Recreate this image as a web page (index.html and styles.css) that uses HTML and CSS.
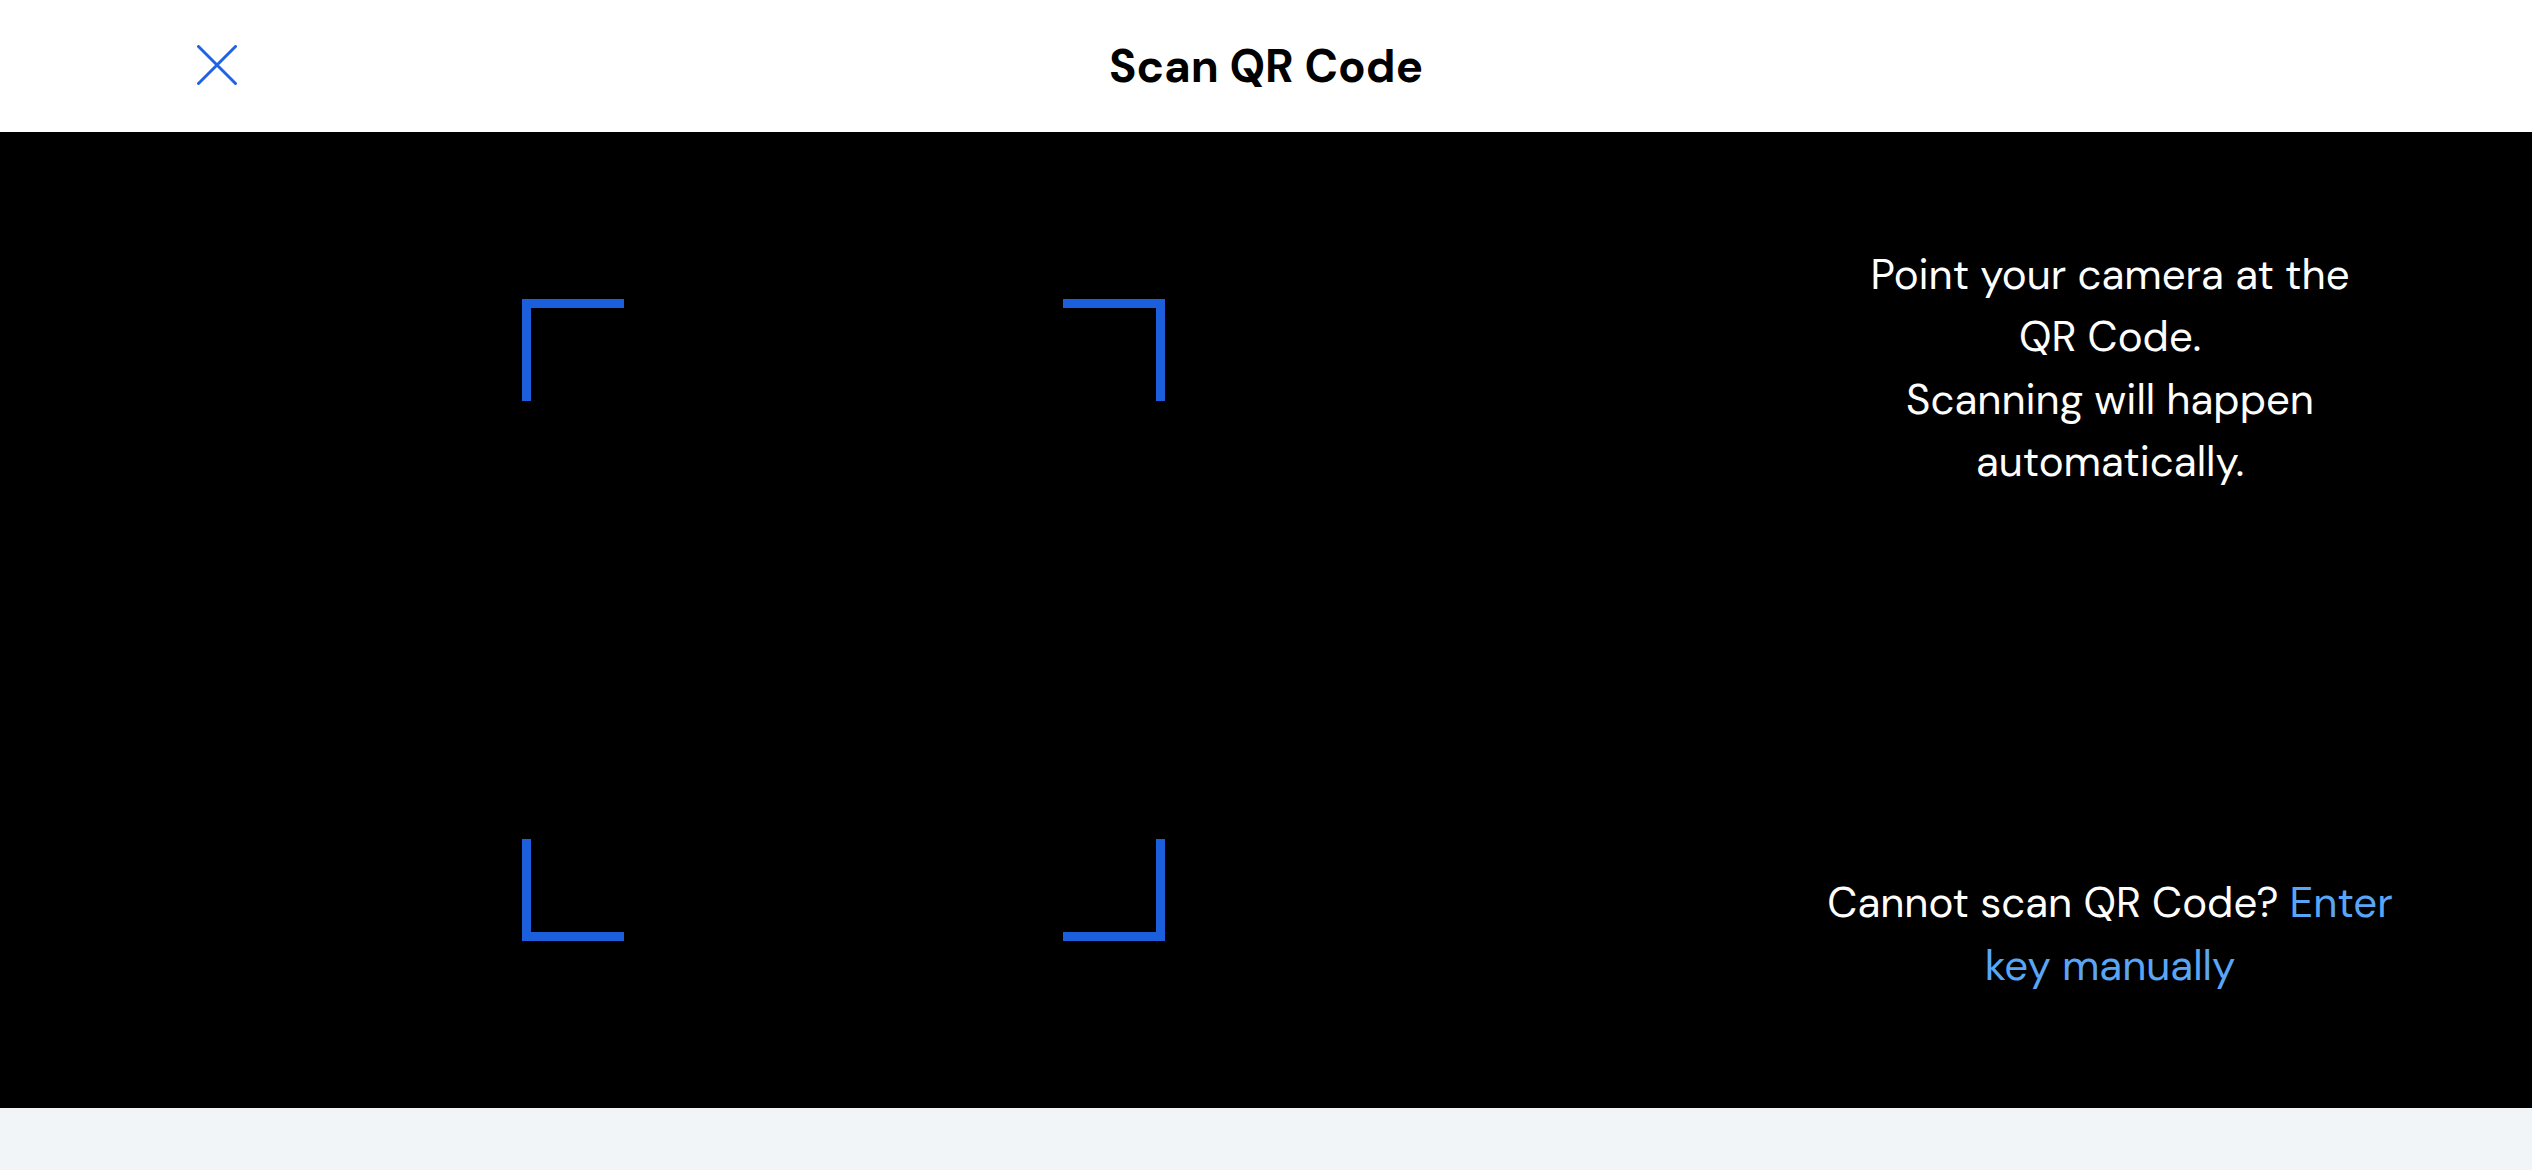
FILE: index.html
```html
<!DOCTYPE html>
<html lang="en">
<head>
<meta charset="utf-8">
<title>Scan QR Code</title>
<link rel="stylesheet" href="styles.css">
</head>
<body>
<div class="app">
  <header class="topbar">
    <button class="close-btn" aria-label="Close">
      <svg width="40" height="40" viewBox="0 0 40 40" fill="none" stroke="currentColor" stroke-width="3" stroke-linecap="round">
        <path d="M1.5 1.5 L38.5 38.5 M38.5 1.5 L1.5 38.5"/>
      </svg>
    </button>
    <h1 class="title">Scan QR Code</h1>
    <div class="spacer"></div>
  </header>
  <main class="scanner">
    <section class="viewfinder-area">
      <div class="viewfinder">
        <span class="corner tl"></span>
        <span class="corner tr"></span>
        <span class="corner bl"></span>
        <span class="corner br"></span>
      </div>
    </section>
    <aside class="info">
      <p class="instructions">Point your camera at the QR Code.<br>Scanning will happen automatically.</p>
      <p class="fallback">Cannot scan QR Code? <a class="link" href="#">Enter key manually</a></p>
    </aside>
  </main>
  <footer class="bottom"></footer>
</div>
</body>
</html>
```
FILE: styles.css
```css
* { box-sizing: border-box; }
html, body { margin: 0; padding: 0; }
body {
  width: 2532px;
  height: 1170px;
  overflow: hidden;
  font-family: "DM Sans", Lato, "Noto Sans", sans-serif;
  background: #f1f5f8;
}
.app {
  display: flex;
  flex-direction: column;
  height: 1170px;
}
.topbar {
  height: 132px;
  background: #ffffff;
  display: grid;
  grid-template-columns: 1fr auto 1fr;
  align-items: center;
  padding: 0 197px;
}
.close-btn {
  justify-self: start;
  width: 40px;
  height: 40px;
  padding: 0;
  border: 0;
  background: none;
  color: #1f62e4;
  display: flex;
  margin-top: -2px;
}
.title {
  margin: 0;
  font-size: 45.5px;
  font-weight: 700;
  color: #000;
}
.scanner {
  height: 976px;
  background: #000;
  display: grid;
  grid-template-columns: 1688px 1fr;
}
.viewfinder-area {
  display: flex;
  align-items: center;
  justify-content: center;
}
.viewfinder {
  width: 643px;
  height: 642px;
  display: grid;
  grid-template-columns: 102px 1fr 102px;
  grid-template-rows: 102px 1fr 102px;
  margin-right: 1px;
}
.corner { border: 0 solid #1b5fdd; }
.tl { grid-column: 1; grid-row: 1; border-top-width: 9px; border-left-width: 9px; }
.tr { grid-column: 3; grid-row: 1; border-top-width: 9px; border-right-width: 9px; }
.bl { grid-column: 1; grid-row: 3; border-bottom-width: 9px; border-left-width: 9px; }
.br { grid-column: 3; grid-row: 3; border-bottom-width: 9px; border-right-width: 9px; }
.info {
  display: flex;
  flex-direction: column;
  align-items: center;
  justify-content: space-between;
  padding: 112px 0 111px;
  color: #ffffff;
  text-align: center;
  font-size: 42px;
  line-height: 62.4px;
}
.info p { margin: 0; }
.instructions { max-width: 505px; }
.fallback { max-width: 600px; }
.link { color: #5aa6f6; text-decoration: none; }
.bottom {
  flex: 1;
  background: #f1f5f8;
}
```
